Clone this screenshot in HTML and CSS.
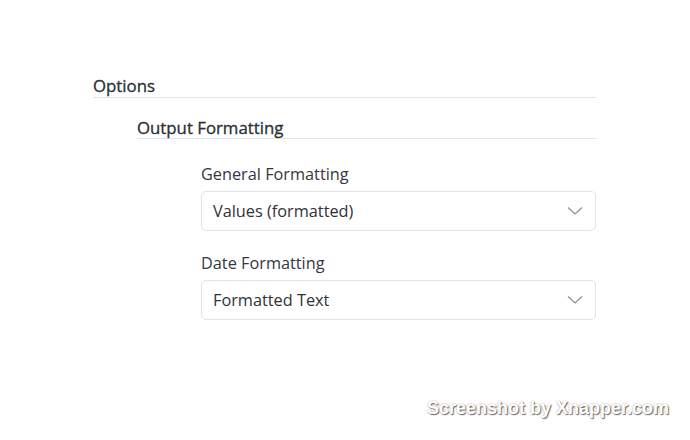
FILE: index.html
```html
<!DOCTYPE html>
<html lang="en">
<head>
  <meta charset="UTF-8" />
  <meta name="viewport" content="width=device-width, initial-scale=1.0" />
  <title>Options</title>
  <link rel="stylesheet" href="styles.css">
</head>
<body>
  <div class="options">
    <h2 class="section-title">Options</h2>

    <div class="group">
      <h3 class="group-title">Output Formatting</h3>

      <div class="fields">
        <div class="field">
          <label class="field-label">General Formatting</label>
          <div class="select">
            <span>Values (formatted)</span>
            <svg class="chevron" width="16" height="10" viewBox="0 0 16 10"><path d="M1 1.5 L8 8 L15 1.5" fill="none" stroke="#8a8f9a" stroke-width="1.2"/></svg>
          </div>
        </div>

        <div class="field">
          <label class="field-label">Date Formatting</label>
          <div class="select">
            <span>Formatted Text</span>
            <svg class="chevron" width="16" height="10" viewBox="0 0 16 10"><path d="M1 1.5 L8 8 L15 1.5" fill="none" stroke="#8a8f9a" stroke-width="1.2"/></svg>
          </div>
        </div>
      </div>
    </div>
  </div>

  <div class="watermark">Screenshot by Xnapper.com</div>
</body>
</html>
```

FILE: styles.css
```css
html, body {
  margin: 0;
  padding: 0;
  background: #ffffff;
  font-family: "Open Sans", "Noto Sans", sans-serif;
  color: #2f3238;
}

body {
  position: relative;
  width: 690px;
  height: 440px;
  overflow: hidden;
}

.options {
  width: 503px;
  margin-left: 93px;
  padding-top: 75px;
}

/* headings are a medium weight: regular face with a thin stroke */
.section-title,
.group-title {
  margin: 0;
  font-size: 16.8px;
  font-weight: 400;
  color: #2a2d33;
  -webkit-text-stroke: 0.3px #2a2d33;
  border-bottom: 1px solid #e1e4ec;
}

.section-title {
  line-height: 22px;
}

.group {
  padding-left: 44px;
  padding-top: 20px;
}

.group-title {
  line-height: 20px;
}

.fields {
  padding-left: 64px;
  padding-top: 23px;
  display: flex;
  flex-direction: column;
  gap: 20px;
}

.field {
  display: flex;
  flex-direction: column;
  gap: 5px;
}

.field-label {
  font-size: 16.3px;
  line-height: 24px;
  color: #34373d;
}

.select {
  height: 38px;
  border: 1px solid #dfe2ea;
  border-radius: 5px;
  display: flex;
  align-items: center;
  justify-content: space-between;
  padding: 0 12px 0 11px;
  font-size: 16.3px;
  color: #2f3238;
}

.chevron {
  display: block;
}

.watermark {
  position: absolute;
  right: 21px;
  bottom: 21px;
  font-family: "Liberation Sans", Arial, sans-serif;
  font-weight: bold;
  font-size: 18px;
  color: #ffffff;
  text-shadow: 1px 1px 1px rgba(0, 0, 0, 0.55), 0 0 2px rgba(0, 0, 0, 0.35);
}
```
